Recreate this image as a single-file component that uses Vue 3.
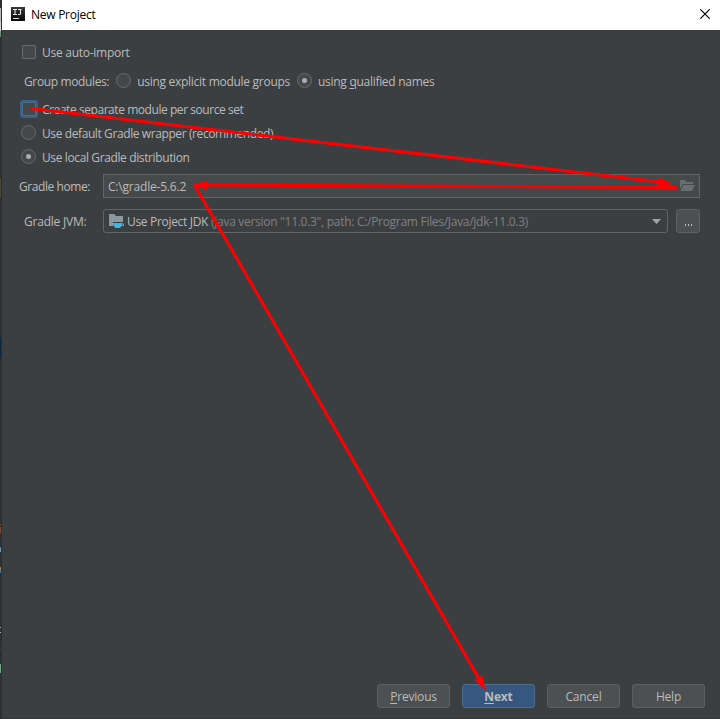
<script setup>
const edge = [
  [8, 14, '#b8b8b8'], [22, 9, '#d8d8d8'], [31, 6, '#6a8a78'], [178, 20, '#49463a'],
  [338, 20, '#0d293e'], [524, 1, '#8b5030'], [527, 6, '#804b36'], [547, 1, '#a8642c'],
  [548, 4, '#5fa2c4'], [567, 3, '#b07a35'], [570, 3, '#3f7ba0'], [627, 1, '#bcbcbc'],
  [632, 1, '#bcbcbc'], [649, 1, '#7a3838'], [664, 9, '#76a38b'],
]
const buttons = [
  { key: 'P', rest: 'revious' },
  { key: 'N', rest: 'ext', primary: true },
  { rest: 'Cancel' },
  { rest: 'Help' },
]
</script>

<template>
  <div class="screen">
    <div class="strip">
      <i v-for="e in edge" :key="e[0]" :style="{ top: e[0] + 'px', height: e[1] + 'px', background: e[2] }"></i>
    </div>
    <div class="window">
      <header>
        <svg class="logo" width="14" height="14" viewBox="0 0 14 14">
          <defs><linearGradient id="lg" x2="0" y2="1"><stop stop-color="#3a3a3a" /><stop offset="1" stop-color="#080808" /></linearGradient></defs>
          <rect width="14" height="14" fill="url(#lg)" />
          <path d="M2 2.500h4M4 2v6M2 7.500h4M7 2.500h3.500M9.500 2v4.500q0 1-1 1H7M2 11.500h6" fill="none" stroke="#e4e4e4" stroke-width="1.1" />
        </svg>
        <span class="title">New Project</span>
        <svg class="close" width="10" height="10" viewBox="0 0 10 10"><path d="M.3.3l9.400 9.400M9.700.3l-9.400 9.400" stroke="#000" stroke-width="1.15" /></svg>
      </header>
      <main>
        <label class="row auto"><span class="check"></span><span class="text t1">Use auto-import</span></label>
        <div class="row group">
          <span class="text t2">Group modules:</span>
          <span class="radio"></span><span class="text t3">using explicit module <u>g</u>roups</span>
          <span class="radio on"></span><span class="text t4">using <u>q</u>ualified names</span>
        </div>
        <label class="row sep"><span class="check focus"></span><span class="text t5">Create separate module per source set</span></label>
        <label class="row def"><span class="radio"></span><span class="text t6">Use default Gradle wrapper (recommended)</span></label>
        <label class="row loc"><span class="radio on"></span><span class="text t7">Use local Gradle distribution</span></label>
        <div class="field home">
          <span class="text lbl t8">Gradle home:</span>
          <div class="input">
            <span class="text t9">C:\gradle-5.6.2</span>
            <svg width="15" height="12" viewBox="0 0 15 12"><path d="M0 0h5l1.500 2H13v2H3L0 9zM3.500 5H15l-3 6H.5z" fill="#696e71" /></svg>
          </div>
        </div>
        <div class="field jvm">
          <span class="text lbl t10">Gradle JVM:</span>
          <div class="combo">
            <svg width="16" height="14" viewBox="0 0 16 14">
              <path d="M0 0h5l2 2h7v6H4v4H0z" fill="#8c989f" />
              <path d="M4 9H13v.5h2V12h-2.500q-.7 1.500-2 2H7q-3-1.500-3-5zM13 10.300v.9h1v-.9z" fill="#40b6e0" fill-rule="evenodd" />
            </svg>
            <span class="text t11">Use Project JDK</span><span class="text t12">(java version "11.0.3", path: C:/Program Files/Java/jdk-11.0.3)</span>
            <svg class="caret" width="9" height="5" viewBox="0 0 9 5"><path d="M0 0h9L4.500 5z" fill="#a0a4a6" /></svg>
          </div>
          <button class="more"><i></i><i></i><i></i></button>
        </div>
      </main>
      <footer>
        <button v-for="b in buttons" :key="b.rest" :class="{ primary: b.primary }"><u v-if="b.key">{{ b.key }}</u>{{ b.rest }}</button>
      </footer>
    </div>
    <svg class="arrows" width="720" height="719" viewBox="0 0 720 719">
      <g stroke="#f00" stroke-width="3" stroke-linecap="round" fill="none">
        <path d="M31.500 108.500L661 182M676 187.500L204 185M195 186L478 677" />
      </g>
      <path d="M673 184L657.500 186.500L659 177.500zM192 185L207 180.500V189.500zM485.500 690.500L474.500 680L482.500 675.500z" fill="#f00" />
    </svg>
  </div>
</template>

<style>
body { margin: 0; overflow: hidden; }
</style>
<style scoped>
* { box-sizing: border-box; }
.screen { position: relative; display: flex; width: 720px; height: 719px; background: #3c3f41; color: #bbbbbb; font: 12px/16px "Open Sans", "Noto Sans", sans-serif; }
.strip { position: relative; width: 2px; background: #2d2f30; }
.strip i { position: absolute; left: 0; width: 1px; }
.window { width: 718px; display: flex; flex-direction: column; border-bottom: 1px solid #333638; }
header { height: 30px; display: flex; align-items: center; background: #fff; color: #000; padding: 0 10px 2px 9px; }
.title { margin-left: 6px; padding-top: 2px; letter-spacing: -0.26px; }
.close { margin-left: auto; }
main { flex: 1; display: flex; flex-direction: column; }
span { white-space: nowrap; }
.text { padding-top: 2px; }
.row { display: flex; align-items: center; height: 16px; padding-left: 19px; }
.row > * { flex: none; }
.auto { margin-top: 14px; padding-left: 20px; }
.group { margin-top: 13px; padding-left: 22px; }
.sep { margin-top: 12px; padding-left: 18px; }
.def { margin-top: 8px; }
.loc { margin-top: 8px; }
.check { width: 14px; height: 14px; border: 1px solid #6b6b6b; border-radius: 1px; background: #43494a; margin-right: 6px; }
.check.focus { width: 18px; height: 18px; border: 2px solid #3d6185; border-radius: 3px; background: #43494a; box-shadow: inset 0 0 0 1px #466d94; margin-right: 4px; }
.radio { display: flex; align-items: center; justify-content: center; width: 15px; height: 15px; border: 1px solid #6b6b6b; border-radius: 50%; background: #43494a; margin: 0 6px 1px 0; }
.radio.on::after { content: ""; width: 5px; height: 5px; border-radius: 50%; background: #adadad; }
.group .radio { margin: 0 6px 1px 7px; }
u { text-decoration: underline; text-underline-offset: 2px; text-decoration-thickness: 1px; }
.field { display: flex; align-items: center; height: 24px; padding-right: 20px; }
.home { margin-top: 9px; }
.jvm { margin-top: 11px; }
.lbl { width: 101px; }
.t1 { letter-spacing: -0.27px; }
.t2 { letter-spacing: -0.37px; }
.t3 { letter-spacing: -0.28px; }
.t4 { letter-spacing: -0.29px; }
.t5 { letter-spacing: -0.44px; }
.t6 { letter-spacing: -0.4px; }
.t7 { letter-spacing: -0.38px; }
.t8 { padding-left: 17px; letter-spacing: -0.43px; }
.t9 { letter-spacing: -0.2px; }
.t10 { padding-left: 22px; letter-spacing: -0.22px; }
.input { flex: 1; height: 24px; display: flex; align-items: center; justify-content: space-between; border: 1px solid #646464; background: #45494a; padding: 0 4px 0 4px; }
.combo { width: 565px; height: 24px; display: flex; align-items: center; border: 1px solid #646464; border-radius: 3px; padding: 0 6px 0 5px; }
.t11 { margin-left: 2px; letter-spacing: -0.32px; }
.t12 { color: #808080; margin-left: 3px; letter-spacing: -0.29px; }
.caret { margin-left: auto; }
button { height: 24px; padding: 2px 0 0; border: 1px solid #5e6060; border-radius: 3px; background: #4c5052; color: #bbb; font: inherit; letter-spacing: -0.18px; }
.more { width: 24px; margin-left: 8px; display: flex; justify-content: center; align-items: flex-end; gap: 2px; padding: 0 0 6px 1px; }
.more i { width: 1px; height: 2px; background: #bbb; }
footer { display: flex; justify-content: flex-end; gap: 12px; padding: 0 15px 10px 0; }
footer button { width: 73px; }
footer .primary { background: #365880; border-color: #4c708c; font-weight: 700; }
.arrows { position: absolute; left: 0; top: 0; pointer-events: none; }
</style>
